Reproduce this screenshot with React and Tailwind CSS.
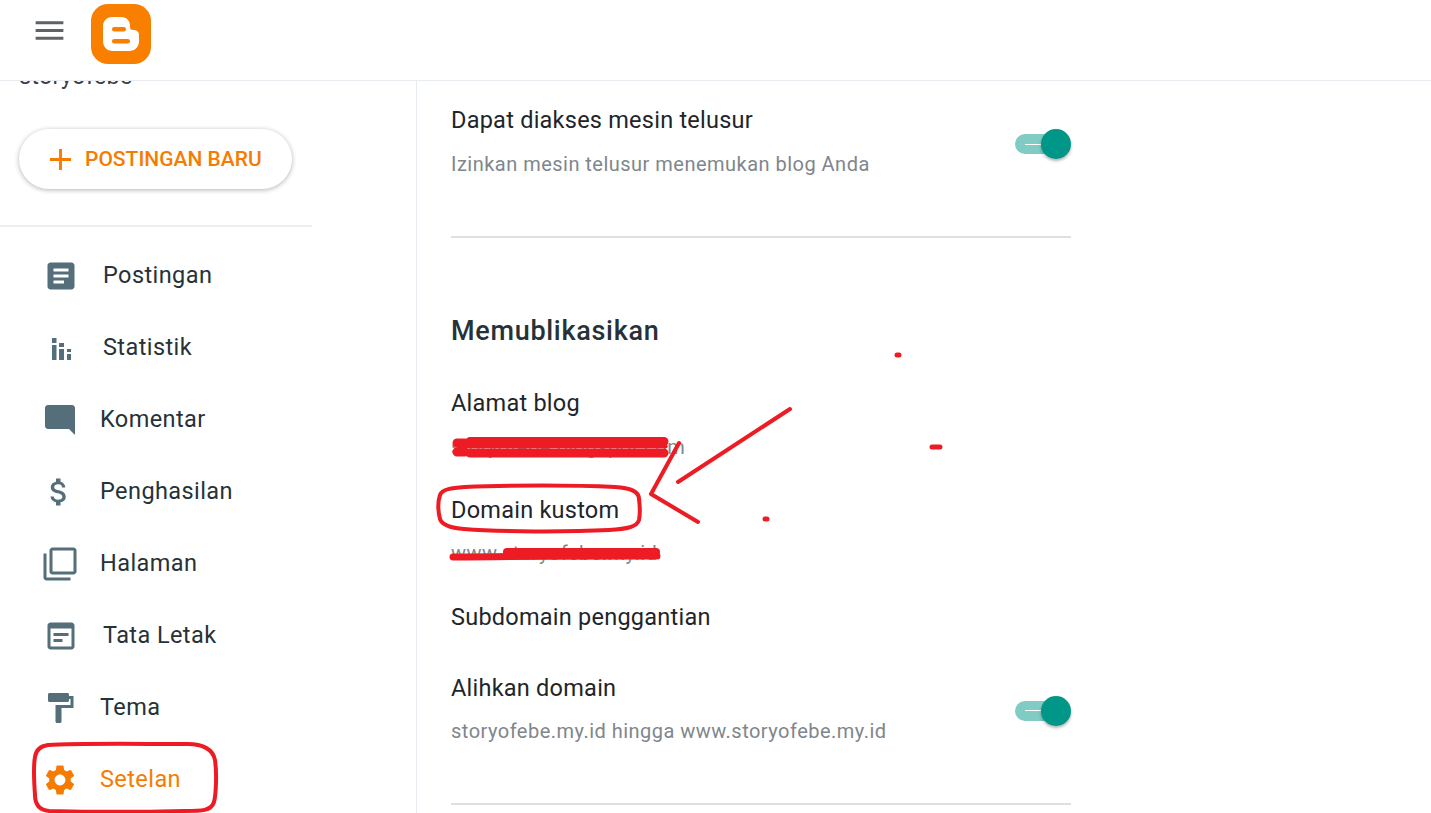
const icons = {
  article:
    "M19 3H5c-1.1 0-2 .9-2 2v14c0 1.1.9 2 2 2h14c1.1 0 2-.9 2-2V5c0-1.1-.9-2-2-2zm-5 14H7v-2h7v2zm3-4H7v-2h10v2zm0-4H7V7h10v2z",
  stats: "M6 5.3h3v3.4H6zM6 10h3v10H6zM10.7 8.7H14v2.6h-3.3zM10.7 12.7H14V20h-3.3zM16 12.7h2.7v2H16zM16 16h2.7v4H16z",
  comment: "M21.99 4c0-1.1-.89-2-1.99-2H4c-1.1 0-2 .9-2 2v12c0 1.1.9 2 2 2h14l4 4-.01-18z",
  money:
    "M11.8 10.9c-2.27-.59-3-1.2-3-2.15 0-1.09 1.01-1.85 2.7-1.85 1.78 0 2.44.85 2.5 2.1h2.21c-.07-1.72-1.12-3.3-3.21-3.81V3h-3v2.16c-1.94.42-3.5 1.68-3.5 3.61 0 2.31 1.91 3.46 4.7 4.13 2.5.6 3 1.48 3 2.41 0 .69-.49 1.79-2.7 1.79-2.06 0-2.87-.92-2.98-2.1h-2.2c.12 2.19 1.76 3.42 3.68 3.83V21h3v-2.15c1.95-.37 3.5-1.5 3.5-3.55 0-2.84-2.43-3.81-4.7-4.4z",
  pages:
    "M3 5H1v16c0 1.1.9 2 2 2h16v-2H3V5zm18-4H7c-1.1 0-2 .9-2 2v14c0 1.1.9 2 2 2h14c1.1 0 2-.9 2-2V3c0-1.1-.9-2-2-2zm0 16H7V3h14v14z",
  layout:
    "M19 3H5c-1.1 0-2 .9-2 2v14c0 1.1.9 2 2 2h14c1.1 0 2-.9 2-2V5c0-1.1-.9-2-2-2zm0 16H5V7h14v12zm-2-7H7v-2h10v2zm-4 4H7v-2h6v2z",
  paint:
    "M18 4V3c0-.55-.45-1-1-1H5c-.55 0-1 .45-1 1v4c0 .55.45 1 1 1h12c.55 0 1-.45 1-1V6h1v4H9v11c0 .55.45 1 1 1h2c.55 0 1-.45 1-1v-9h8V4h-3z",
  gear:
    "M19.14 12.94c.04-.3.06-.61.06-.94 0-.32-.02-.64-.07-.94l2.03-1.58c.18-.14.23-.41.12-.61l-1.92-3.32c-.12-.22-.37-.29-.59-.22l-2.39.96c-.5-.38-1.03-.7-1.62-.94l-.36-2.54c-.04-.24-.24-.41-.48-.41h-3.84c-.24 0-.43.17-.47.41l-.36 2.54c-.59.24-1.13.57-1.62.94l-2.39-.96c-.22-.08-.47 0-.59.22L2.74 8.87c-.12.21-.08.47.12.61l2.03 1.58c-.05.3-.09.63-.09.94s.02.64.07.94l-2.03 1.58c-.18.14-.23.41-.12.61l1.92 3.32c.12.22.37.29.59.22l2.39-.96c.5.38 1.03.7 1.62.94l.36 2.54c.05.24.24.41.48.41h3.84c.24 0 .44-.17.47-.41l.36-2.54c.59-.24 1.13-.56 1.62-.94l2.39.96c.22.08.47 0 .59-.22l1.92-3.32c.12-.22.07-.47-.12-.61l-2.01-1.58zM12 15.6c-1.98 0-3.6-1.62-3.6-3.6s1.62-3.6 3.6-3.6 3.6 1.62 3.6 3.6-1.62 3.6-3.6 3.6z",
};

const navItems = [
  { label: "Postingan", icon: icons.article, box: "ml-[43px] w-[60px]" },
  { label: "Statistik", icon: icons.stats, box: "ml-[43px] w-[60px]" },
  { label: "Komentar", icon: icons.comment, box: "ml-[42px] w-[58px]" },
  { label: "Penghasilan", icon: icons.money, box: "ml-[41px] w-[59px]" },
  { label: "Halaman", icon: icons.pages, box: "ml-[42px] w-[58px]" },
  { label: "Tata Letak", icon: icons.layout, box: "ml-[43px] w-[60px]" },
  { label: "Tema", icon: icons.paint, box: "ml-[42px] w-[58px]" },
  { label: "Setelan", icon: icons.gear, box: "ml-[42px] w-[58px]", active: true },
];

const Icon = ({ d, className }) => (
  <svg viewBox="0 0 24 24" className={className} fill="currentColor">
    <path d={d} />
  </svg>
);

const Toggle = ({ className = "" }) => (
  <div className={`relative h-[20px] w-[56px] shrink-0 rounded-full ${className}`}>
    <div className="absolute left-0 top-0 h-[20px] w-[45px] rounded-full bg-[#80cbc4]" />
    <div className="absolute left-[10px] top-[9.5px] h-px w-[16px] bg-white" />
    <div className="absolute right-0 top-[-5px] h-[30px] w-[30px] rounded-full bg-[#009688] shadow-[0_2px_3px_rgba(0,0,0,0.3)]" />
  </div>
);

const Title = ({ className = "", children }) => (
  <div className={`h-[30px] text-[23.5px] leading-[30px] tracking-[0.24px] text-[#212529] ${className}`}>
    {children}
  </div>
);

const Sub = ({ className = "", children }) => (
  <div className={`h-[30px] text-[20px] leading-[30px] tracking-[0.48px] text-[#80868b] ${className}`}>
    {children}
  </div>
);

const Scribbles = () => (
  <svg className="pointer-events-none absolute inset-0 z-20" width="1431" height="813" fill="none" stroke="#ed1c24" strokeLinecap="round" strokeLinejoin="round">
    {/* Setelan ring */}
    <path strokeWidth="4" d="M48 745c30-2 90-1 140-1 14 0 25 5 27 16 2 14 1 34-1 42-3 9-12 9-30 9-40 1-95 1-135 0-10-1-14-7-14-16-1-14-2-28 0-38 1-8 6-11 13-12z" />
    {/* Alamat blog scratched out */}
    <path strokeWidth="9" d="M457 443h8M470 441.500h194" />
    <path strokeWidth="9" d="M457 452h8M470 453h194" />
    <path strokeWidth="3.500" d="M458 446.500h208" />
    {/* Arrow */}
    <path strokeWidth="4" d="M678 482 790 409" />
    <path strokeWidth="4" d="M679 443 651 494 698 522" />
    {/* Domain kustom ring */}
    <path strokeWidth="4" d="M465 487c45-2 110-2 150 0 15 1 24 4 24 12 1 8 1 16 0 21-2 7-12 9-30 10-40 2-110 2-145-1-12-1-22-4-24-10-2-8-2-18 0-24 2-6 12-7 25-8z" />
    {/* www scratched out */}
    <path strokeWidth="7" d="M453 557c60-1 140-1 204-1" />
    <path strokeWidth="8" d="M507 552h149" />
    {/* Stray dots */}
    <path strokeWidth="5" d="M897 355h2M932 447h8M765 519h2" />
  </svg>
);

export default function App() {
  return (
    <div className="relative flex h-[813px] w-[1431px] flex-col overflow-hidden bg-white font-['Roboto',sans-serif]">
      <header className="relative z-10 flex h-[81px] shrink-0 items-start border-b border-[#e8ecf0] bg-white">
        <Icon d="M3 18h18v-2H3v2zm0-5h18v-2H3v2zm0-7v2h18V6H3z" className="ml-[31px] mt-[12px] h-[37px] w-[37px] text-[#5f6368]" />
        <div className="ml-[23px] mt-[4px] h-[60px] w-[60px]">
          <svg viewBox="0 0 60 60" className="h-full w-full">
            <rect width="60" height="60" rx="17" fill="#f87f00" />
            <path d="M21 13h9c6 0 9 4 9 9v1c0 2 1 3 3 3 4 0 6 2 6 5v6c0 6-4 10-10 10H22c-6 0-10-4-10-10V22c0-5 4-9 9-9z" fill="#fff" />
            <rect x="21" y="23" width="14" height="4.500" rx="2.200" fill="#f87f00" />
            <rect x="21" y="35" width="18" height="4.500" rx="2.200" fill="#f87f00" />
          </svg>
        </div>
      </header>

      <div className="flex min-h-0 flex-1">
        <aside className="w-[417px] shrink-0 border-r border-[#e8ecf0]">
          <div className="-mt-[20px] ml-[19px] h-[30px] text-[23.5px] leading-[30px] tracking-[0.2px] text-[#3c4043]">storyofebe</div>
          <button className="ml-[19px] mt-[38px] flex h-[60px] w-[273px] items-center rounded-full bg-white pl-[30px] pt-px text-[21px] font-medium text-[#f57c00] shadow-[0_1px_5px_rgba(0,0,0,0.3)]">
            <svg viewBox="0 0 24 24" className="mr-[13px] h-[23px] w-[23px]" fill="currentColor">
              <path d="M10.5 1h3v9.500H23v3h-9.500V23h-3v-9.500H1v-3h9.500z" />
            </svg>
            POSTINGAN BARU
          </button>
          <div className="mt-[36px] h-[2px] w-[312px] bg-[#ebeff3]" />
          <nav className="mt-[13px] flex flex-col">
            {navItems.map((item) => (
              <div
                key={item.label}
                className={`flex h-[72px] items-center text-[23.5px] tracking-[0.42px] ${item.active ? "text-[#f57c00]" : "text-[#263238]"}`}
              >
                <div className={`flex shrink-0 items-center ${item.box}`}>
                  <Icon d={item.icon} className={`h-[36px] w-[36px] ${item.active ? "text-[#f57c00]" : "text-[#546e7a]"}`} />
                </div>
                {item.label}
              </div>
            ))}
          </nav>
        </aside>

        <main className="ml-[34px] flex w-[620px] flex-col">
          <div className="mt-[24px] flex items-center justify-between">
            <div>
              <Title>Dapat diakses mesin telusur</Title>
              <Sub className="mt-[14px]">Izinkan mesin telusur menemukan blog Anda</Sub>
            </div>
            <Toggle className="mt-[4px]" />
          </div>
          <div className="mt-[57px] h-[2px] bg-[#e0e0e0]" />
          <div className="mt-[78px] h-[30px] text-[27px] font-medium leading-[30px] tracking-[0.7px] text-[#263238]">Memublikasikan</div>
          <Title className="mt-[42px]">Alamat blog</Title>
          <Sub className="mt-[14px]">storyofebe.blogspot.com</Sub>
          <Title className="mt-[33px]">Domain kustom</Title>
          <Sub className="mt-[13px]">www.storyofebe.my.id</Sub>
          <Title className="mt-[34px]">Subdomain penggantian</Title>
          <div className="mt-[41px] flex items-center justify-between">
            <div>
              <Title>Alihkan domain</Title>
              <Sub className="mt-[13px]">storyofebe.my.id hingga www.storyofebe.my.id</Sub>
            </div>
            <Toggle className="mt-[2px]" />
          </div>
          <div className="mt-[57px] h-[2px] bg-[#e0e0e0]" />
        </main>
      </div>

      <Scribbles />
    </div>
  );
}
